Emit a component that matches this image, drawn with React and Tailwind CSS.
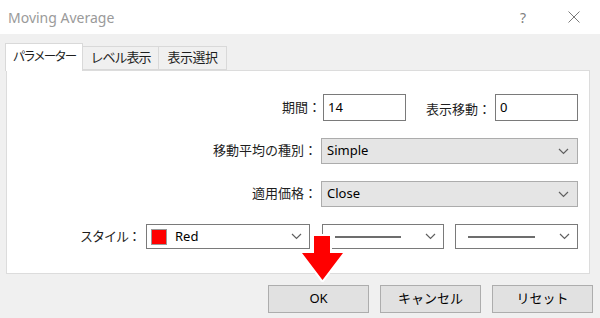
import React from 'react';

const font = { fontFamily: '"Noto Sans", "Noto Sans CJK JP", sans-serif' };

const Chevron = () => (
  <svg width="11" height="7" viewBox="0 0 11 7" className="shrink-0">
    <path d="M1 1 L5.5 5.5 L10 1" fill="none" stroke="#606060" strokeWidth="1.2" />
  </svg>
);

const Label = ({ children }) => (
  <span className="text-[13px] text-[#1e1e1e] whitespace-nowrap">{children}</span>
);

const TextBox = ({ value }) => (
  <div className="w-[83px] h-[27px] bg-white border border-[#7a7a7a] flex items-center px-[4px] text-[13px] text-black">
    {value}
  </div>
);

const Select = ({ value }) => (
  <div className="w-[257px] h-[26px] bg-[#e5e5e5] border border-[#acacac] flex items-center justify-between pl-[5px] pr-[8px] text-[13px] text-black">
    <span>{value}</span>
    <Chevron />
  </div>
);

const LineSelect = ({ width }) => (
  <div className={`${width} h-[25px] bg-white border border-[#7a7a7a] flex items-center justify-between pl-[12px] pr-[7px]`}>
    <div className="flex-1 h-[2px] bg-[#6d6d6d] mr-[24px]" />
    <Chevron />
  </div>
);

export default function App() {
  return (
    <div className="w-[600px] h-[318px] bg-[#f0f0f0] relative overflow-hidden" style={font}>
      {/* タイトルバー */}
      <div className="h-[34px] bg-white flex items-center pl-[8px] pr-[20px]">
        <span className="text-[14px] text-[#9a9a9a] flex-1">Moving Average</span>
        <span className="text-[14px] text-[#808080] mr-[42px]">?</span>
        <svg width="12" height="12" viewBox="0 0 12 12">
          <path d="M0.5 0.5 L11.5 11.5 M11.5 0.5 L0.5 11.5" stroke="#7a7a7a" strokeWidth="1" />
        </svg>
      </div>

      {/* タブ */}
      <div className="pt-[9px] pl-[5px] flex items-end">
        <div className="w-[78px] h-[28px] bg-white border border-b-0 border-[#d9d9d9] flex items-center justify-center text-[12.5px] tracking-[-2px] text-[#1e1e1e] -mb-px relative z-10">
          パラメーター
        </div>
        <div className="w-[76px] h-[24px] bg-[#f0f0f0] border border-l-0 border-[#d9d9d9] flex items-center justify-center text-[13px] tracking-[-1px] text-[#1e1e1e]">
          レベル表示
        </div>
        <div className="w-[68px] h-[24px] bg-[#f0f0f0] border border-l-0 border-[#d9d9d9] flex items-center justify-center text-[13px] tracking-[-0.5px] text-[#1e1e1e]">
          表示選択
        </div>
      </div>

      {/* パネル */}
      <div className="ml-[6px] w-[584px] h-[204px] bg-white border border-[#dcdcdc] pt-[23px] pr-[11px] flex flex-col gap-[17px]">
        <div className="flex items-center justify-end">
          <Label>期間：</Label>
          <div className="ml-[2px]"><TextBox value="14" /></div>
          <div className="ml-[20px]"><Label>表示移動：</Label></div>
          <div className="ml-[4px]"><TextBox value="0" /></div>
        </div>
        <div className="flex items-center justify-end gap-[4px]">
          <Label>移動平均の種別：</Label>
          <Select value="Simple" />
        </div>
        <div className="flex items-center justify-end gap-[4px]">
          <Label>適用価格：</Label>
          <Select value="Close" />
        </div>
        <div className="flex items-center justify-end">
          <span className="text-[13px] tracking-[-1px] text-[#1e1e1e] whitespace-nowrap">スタイル：</span>
          <div className="ml-[6px] w-[164px] h-[25px] bg-white border border-[#7a7a7a] flex items-center pl-[4px] pr-[7px]">
            <div className="w-[16px] h-[16px] bg-[#ff0000] border border-[#9a9a9a]" />
            <span className="ml-[8px] flex-1 text-[13px] text-black">Red</span>
            <Chevron />
          </div>
          <div className="ml-[12px]"><LineSelect width="w-[122px]" /></div>
          <div className="ml-[11px]"><LineSelect width="w-[123px]" /></div>
        </div>
      </div>

      {/* ボタン */}
      <div className="mt-[11px] flex justify-end gap-[11px] pr-[7px]">
        <div className="w-[101px] h-[28px] bg-[#e1e1e1] border border-[#adadad] flex items-center justify-center text-[13px] text-black">OK</div>
        <div className="w-[101px] h-[28px] bg-[#e1e1e1] border border-[#adadad] flex items-center justify-center text-[13px] text-black">キャンセル</div>
        <div className="w-[101px] h-[28px] bg-[#e1e1e1] border border-[#adadad] flex items-center justify-center text-[13px] text-black">リセット</div>
      </div>

      {/* 赤い矢印 */}
      <svg className="absolute left-[296px] top-[230px]" width="54" height="58" viewBox="296 230 54 58">
        <path
          d="M314 236 L330 236 L330 253 L343 253 L322.5 280 L302 253 L314 253 Z"
          fill="#ff0000"
          stroke="#ffffff"
          strokeWidth="4"
          strokeLinejoin="round"
          paintOrder="stroke"
        />
      </svg>
    </div>
  );
}
